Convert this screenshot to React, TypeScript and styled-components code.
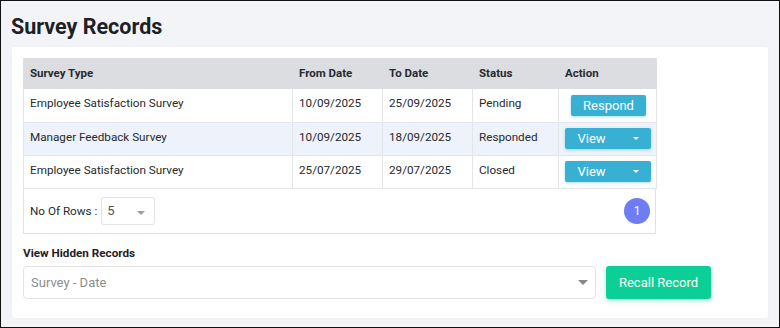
import React from "react";
import styled, { createGlobalStyle } from "styled-components";

const GlobalStyle = createGlobalStyle`
  body {
    margin: 0;
    font-family: Roboto, "Liberation Sans", Arial, sans-serif;
    color: #212529;
  }
  * { box-sizing: border-box; }
`;

const Frame = styled.div`
  width: 780px;
  height: 328px;
  border: 1px solid #111;
  background: #f3f4f8;
  padding: 10px 0 0 10px;
  overflow: hidden;
`;

const Title = styled.h1`
  margin: 0;
  font-size: 21.5px;
  line-height: 32px;
  font-weight: 700;
  color: #1d2125;
`;

const Card = styled.section`
  margin: 4px 0 0 1px;
  width: 756px;
  height: 271px;
  background: #fff;
  border-radius: 3px;
  box-shadow: 0 0 3px rgba(0, 0, 0, 0.04);
  padding: 11px 0 0 11px;
`;

const Table = styled.table`
  width: 633px;
  border-collapse: collapse;
  table-layout: fixed;
  font-size: 11.7px;
  color: #262a2e;
`;

const Th = styled.th<{ $w: number }>`
  width: ${(p) => p.$w}px;
  height: 30px;
  background: #dcdde1;
  text-align: left;
  font-weight: 700;
  font-size: 11.5px;
  padding: 0 6px 1px;
  border: 1px solid #dcdde1;
`;

const Tr = styled.tr<{ $alt?: boolean }>`
  background: ${(p) => (p.$alt ? "#eef2fa" : "#fff")};
`;

const Td = styled.td<{ $h?: number; $center?: boolean }>`
  height: ${(p) => p.$h ?? 33}px;
  padding: 7px 6px 0;
  border: 1px solid #e4e5e9;
  text-align: ${(p) => (p.$center ? "center" : "left")};
  vertical-align: top;
  line-height: 14px;
`;

const ActionTd = styled(Td)`
  padding: 5px 0 0;
`;

const InfoButton = styled.button`
  height: 21px;
  border: none;
  border-radius: 2px;
  background: #38b0d4;
  color: #fff;
  font-family: inherit;
  font-size: 13px;
  box-shadow: 0 1px 3px rgba(56, 176, 212, 0.45);
  cursor: pointer;
  display: inline-flex;
  align-items: center;
  vertical-align: top;
`;

const RespondButton = styled(InfoButton)`
  width: 75px;
  justify-content: center;
  margin: 1px 0 0 2px;
`;

const ViewButton = styled(InfoButton)`
  width: 86px;
  justify-content: space-between;
  padding: 0 12px 0 13px;
`;

const Caret = styled.span<{ $color: string; $size: number }>`
  width: 0;
  height: 0;
  border-left: ${(p) => p.$size}px solid transparent;
  border-right: ${(p) => p.$size}px solid transparent;
  border-top: ${(p) => p.$size}px solid ${(p) => p.$color};
`;

const Footer = styled.div`
  width: 633px;
  height: 45px;
  border: 1px solid #e0e1e5;
  border-top: none;
  display: flex;
  align-items: center;
  justify-content: space-between;
  padding: 0 5px 0 6px;
  font-size: 11.7px;
  color: #262a2e;
`;

const RowsPicker = styled.div`
  display: flex;
  align-items: center;
  gap: 4px;
`;

const SmallSelect = styled.div`
  width: 54px;
  height: 28px;
  border: 1px solid #e3e3e3;
  border-radius: 3px;
  display: flex;
  align-items: center;
  justify-content: space-between;
  padding: 0 9px 2px 5px;
  font-size: 13px;
  color: #555;
  & > span:last-child { margin-top: 6px; }
`;

const PageDot = styled.div`
  width: 26px;
  height: 26px;
  border-radius: 50%;
  background: #6f7cf4;
  color: #fff;
  font-size: 12px;
  display: flex;
  align-items: center;
  justify-content: center;
`;

const Label = styled.div`
  margin-top: 12px;
  font-size: 11.7px;
  font-weight: 700;
  color: #1d2125;
  line-height: 15px;
`;

const HiddenRow = styled.div`
  margin-top: 5px;
  display: flex;
  gap: 10px;
  align-items: center;
`;

const BigSelect = styled.div`
  width: 573px;
  height: 33px;
  border: 1px solid #e2e3e6;
  border-radius: 4px;
  display: flex;
  align-items: center;
  justify-content: space-between;
  padding: 0 7px 0 7px;
  font-size: 13px;
  color: #8a8d91;
`;

const RecallButton = styled.button`
  width: 105px;
  height: 33px;
  border: none;
  border-radius: 3px;
  background: #0ccf95;
  color: #fff;
  font-family: inherit;
  font-size: 13px;
  box-shadow: 0 2px 5px rgba(12, 207, 149, 0.35);
  cursor: pointer;
`;

const rows = [
  { type: "Employee Satisfaction Survey", from: "10/09/2025", to: "25/09/2025", status: "Pending", action: "respond" },
  { type: "Manager Feedback Survey", from: "10/09/2025", to: "18/09/2025", status: "Responded", action: "view" },
  { type: "Employee Satisfaction Survey", from: "25/07/2025", to: "29/07/2025", status: "Closed", action: "view" },
];

export default function App() {
  return (
    <>
      <GlobalStyle />
      <Frame>
        <Title>Survey Records</Title>
        <Card>
          <Table>
            <thead>
              <tr>
                <Th $w={269}>Survey Type</Th>
                <Th $w={90}>From Date</Th>
                <Th $w={90}>To Date</Th>
                <Th $w={86}>Status</Th>
                <Th $w={98}>Action</Th>
              </tr>
            </thead>
            <tbody>
              {rows.map((r, i) => (
                <Tr key={i} $alt={i === 1}>
                  <Td $h={i === 0 ? 34 : 33}>{r.type}</Td>
                  <Td>{r.from}</Td>
                  <Td>{r.to}</Td>
                  <Td>{r.status}</Td>
                  <ActionTd $center>
                    {r.action === "respond" ? (
                      <RespondButton>Respond</RespondButton>
                    ) : (
                      <ViewButton>
                        <span>View</span>
                        <Caret $color="#fff" $size={3} />
                      </ViewButton>
                    )}
                  </ActionTd>
                </Tr>
              ))}
            </tbody>
          </Table>
          <Footer>
            <RowsPicker>
              <span>No Of Rows :</span>
              <SmallSelect>
                <span>5</span>
                <Caret $color="#999" $size={4} />
              </SmallSelect>
            </RowsPicker>
            <PageDot>1</PageDot>
          </Footer>
          <Label>View Hidden Records</Label>
          <HiddenRow>
            <BigSelect>
              <span>Survey - Date</span>
              <Caret $color="#888" $size={5} />
            </BigSelect>
            <RecallButton>Recall Record</RecallButton>
          </HiddenRow>
        </Card>
      </Frame>
    </>
  );
}
